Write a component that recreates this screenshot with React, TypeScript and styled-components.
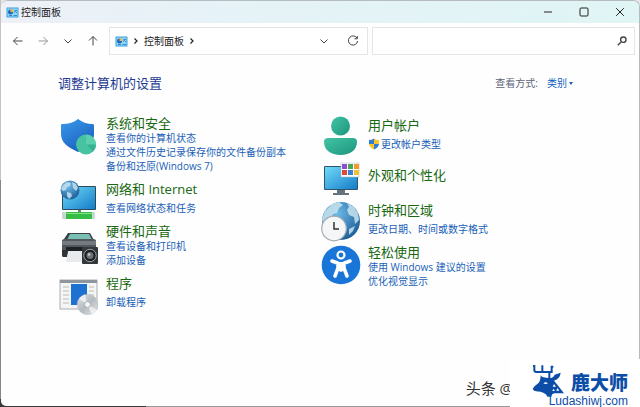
import React from "react";
import styled, { createGlobalStyle } from "styled-components";

const GlobalStyle = createGlobalStyle`
  *, *::before, *::after { box-sizing: border-box; }
  body {
    margin: 0;
    font-family: "Open Sans", "Noto Sans CJK SC", sans-serif;
    font-size: 10px;
    line-height: 14px;
    color: #222;
  }
  button, input, select { font: inherit; color: inherit; }
`;

const Frame = styled.div`
  position: relative;
  display: flex;
  min-height: 100vh;
  padding: 0 0 1px 1px;
  overflow: hidden;
  background:
    linear-gradient(to right, #3a3a3a 146px, #979797 146px) bottom / 100% 8px no-repeat,
    linear-gradient(#c4c4c4 180px, #868686 180px) left / 1px 100% no-repeat,
    #e6e6e6;
`;

const Window = styled.main`
  flex: 1;
  display: flex;
  flex-direction: column;
  min-width: 0;
  background: #fefefe;
  border: 1px solid #b4bcbf;
  border-width: 1px 1px 0 0;
  border-radius: 7px 7px 0 5px;
  overflow: hidden;
`;

const TitleBar = styled.header`
  display: flex;
  align-items: center;
  height: 22px;
  padding-left: 5px;
  gap: 2px;
  background: linear-gradient(to right, #eef0f7, #e6f2f7 30%, #e0f5f5);
`;

const Title = styled.h1`
  flex: 1;
  margin: 0;
  font-size: 10px;
  font-weight: 400;
`;

const CaptionButtons = styled.div`
  display: flex;
  padding-right: 1px;
`;

const CaptionButton = styled.button`
  display: grid;
  place-items: center;
  width: 36px;
  height: 22px;
  padding: 0;
  border: 0;
  background: none;
`;

const NavBar = styled.nav`
  display: flex;
  align-items: center;
  padding: 4px;
  gap: 4px;
`;

const NavButtons = styled.div`
  display: flex;
  flex: none;
  width: 100px;
`;

const IconButton = styled.button<{ $faded?: boolean }>`
  display: grid;
  place-items: center;
  flex: none;
  width: 25px;
  height: 26px;
  padding: 0;
  border: 0;
  background: none;
  color: ${(p) => (p.$faded ? "#979797" : "#444")};
`;

const Field = styled.div<{ $grow: number }>`
  display: flex;
  align-items: center;
  flex: ${(p) => p.$grow} 1 0;
  min-width: 0;
  height: 28px;
  border: 1px solid #e4e5e7;
  background: #fff;
`;

const AddressButtons = styled.div`
  display: flex;
  gap: 4px;
  padding-right: 2px;
`;

const Crumbs = styled.div`
  display: flex;
  align-items: center;
  flex: 1;
  gap: 2px;
  padding-left: 5px;
`;

const Crumb = styled.button`
  padding: 0;
  border: 0;
  background: none;
`;

const SearchInput = styled.input`
  flex: 1;
  min-width: 0;
  padding: 0 8px;
  border: 0;
  outline: 0;
  background: none;
`;

const Content = styled.section`
  padding: 14px 57px 16px;
`;

const Heading = styled.div`
  display: flex;
  align-items: center;
  justify-content: space-between;
  height: 20px;
  padding-right: 9px;
`;

const PageTitle = styled.h2`
  margin: 0;
  font-size: 13px;
  line-height: 20px;
  font-weight: 400;
  color: #1f3a93;
`;

const ViewBy = styled.div`
  display: flex;
  align-items: center;
  color: #5c6478;
`;

const ViewSelect = styled.select`
  appearance: none;
  width: 22px;
  margin-left: 9px;
  padding: 0;
  border: 0;
  background: none;
  color: #0b5fc4;
`;

const Columns = styled.div`
  display: grid;
  grid-template-columns: 1fr 1fr;
  margin-top: 22px;
`;

const Column = styled.ul<{ $lowered?: boolean }>`
  display: flex;
  flex-direction: column;
  gap: 8px;
  margin: 0;
  padding: ${(p) => (p.$lowered ? "2px" : "0")} 0 0;
  list-style: none;
`;

const CategoryRow = styled.li`
  display: flex;
  align-items: flex-start;
  gap: 8px;
`;

const CategoryIcon = styled.svg`
  flex: none;
  width: 40px;
  height: 40px;
  margin-bottom: -8px;
  overflow: visible;
`;

const CategoryText = styled.div<{ $titleOnly: boolean }>`
  min-width: 0;
  white-space: nowrap;
  padding: ${(p) => (p.$titleOnly ? "8px 0 11px" : "0")};
`;

const CategoryTitle = styled.a`
  display: block;
  font-size: 13px;
  line-height: 16px;
  color: #17680f;
  text-decoration: none;
`;

const Links = styled.div<{ $single: boolean }>`
  display: flex;
  flex-direction: column;
  padding-top: ${(p) => (p.$single ? "4px" : "0")};
`;

const TaskLink = styled.a`
  display: flex;
  align-items: center;
  gap: 1px;
  color: #1a5fb8;
  text-decoration: none;
`;

const Watermark = styled.div`
  position: absolute;
  right: 0;
  bottom: 0;
  display: flex;
  align-items: flex-end;
`;

const Handle = styled.span`
  margin-right: -3px;
  padding-bottom: 9px;
  font-size: 15px;
  line-height: 20px;
  color: #333;
`;

const Brand = styled.div`
  position: relative;
  display: flex;
  width: 130px;
  height: 48px;
  padding: 5px 12px 0 22px;
  background: #fff;
  color: #0c4da8;
`;

const BrandText = styled.div`
  display: flex;
  flex: 1;
  flex-direction: column;
  align-items: flex-end;
  gap: 3px;
  margin-left: -33px;
  padding-top: 8px;
`;

const BrandName = styled.strong`
  font-family: "Noto Sans CJK SC", sans-serif;
  font-size: 19px;
  line-height: 20px;
  font-weight: 900;
`;

const BrandSite = styled.span`
  font-family: "Liberation Sans", sans-serif;
  font-size: 12px;
  line-height: 12px;
`;

const PanelIcon = () => (
  <svg width="13" height="11" viewBox="0 0 26 22" aria-hidden="true">
    <rect x="1" y="1" width="24" height="20" rx="1" fill="#3aa0e0" />
    <rect x="3" y="3" width="20" height="16" fill="#8fd6f8" />
    <circle cx="9" cy="10" r="5" fill="#2668bd" />
    <path d="M9 10V4a6 6 0 0 1 6 6z" fill="#f4b63c" />
    <path d="M17 7h5M16 11l3-2 3 3M6 17h6M15 17h7" stroke="#1d78bd" strokeWidth="1.6" fill="none" />
  </svg>
);

const glyphs: Record<string, string> = {
  back: "M10.5 6H1.5M5.5 2L1.5 6l4 4",
  forward: "M1.5 6h9M6.5 2l4 4-4 4",
  down: "M2.5 4.5L6 8l3.5-3.5",
  up: "M6 10.5v-9M2 5.5l4-4 4 4",
  right: "M4.5 3.5L7 6 4.5 8.5",
  refresh: "M10 3.2A4.6 4.6 0 1 0 10.6 6M10.3 1v2.8H7.5",
  minimize: "M2 6h8",
  maximize: "M3 2h6a1 1 0 0 1 1 1v6a1 1 0 0 1-1 1H3a1 1 0 0 1-1-1V3a1 1 0 0 1 1-1z",
  close: "M2.2 2.2l7.6 7.6M9.8 2.2L2.2 9.8",
  search: "M5.3 6.7L1.8 10.2M7.3 2a2.7 2.7 0 1 1 0 5.4 2.7 2.7 0 0 1 0-5.4z",
};

const Glyph = ({ name, weight = 1 }: { name: string; weight?: number }) => (
  <svg width="12" height="12" viewBox="0 0 12 12" fill="none" stroke="currentColor" strokeWidth={weight} aria-hidden="true">
    <path d={glyphs[name]} />
  </svg>
);

const UacShield = () => (
  <svg width="12" height="12" viewBox="0 0 24 24" aria-hidden="true">
    <path d="M12 1Q8 4 2 4v8h10z" fill="#2e7fd4" />
    <path d="M12 1q4 3 10 3v8H12z" fill="#f8c62c" />
    <path d="M2 12q1 7 10 11V12z" fill="#f8c62c" />
    <path d="M22 12q-1 7-10 11V12z" fill="#2e7fd4" />
  </svg>
);

const SecurityArt = () => (
  <>
    <defs>
      <linearGradient id="shield" x1="0" y1="0" x2="0.6" y2="1">
        <stop offset="0" stopColor="#3a9bea" />
        <stop offset="1" stopColor="#1b5fc0" />
      </linearGradient>
    </defs>
    <path d="M20 4c-4 3.5-9 5-15.5 5C3.500 9 3 9.500 3 10.500V19c0 8 6 13 17 18 11-5 16-10 16-18v-8.500c0-1-.5-1.500-1.500-1.500C29 9 24 7 20 4z" fill="url(#shield)" />
    <circle cx="28" cy="29.5" r="10" fill="#48c3a2" />
    <path d="M28 29.5V19.5a10 10 0 0 1 7 17z" fill="#5ad0ae" />
    <path d="M28 29.5h10a10 10 0 0 1-3 7z" fill="#35b391" />
  </>
);

const NetworkArt = () => (
  <>
    <defs>
      <linearGradient id="screen" x1="0" y1="0" x2="1" y2="1">
        <stop offset="0" stopColor="#70daf8" />
        <stop offset="1" stopColor="#157cc8" />
      </linearGradient>
      <radialGradient id="globe" cx="0.4" cy="0.3" r="0.8">
        <stop offset="0" stopColor="#6ebbe8" />
        <stop offset="1" stopColor="#15548f" />
      </radialGradient>
    </defs>
    <rect x="4" y="5" width="34" height="24" rx="1" fill="#2b4a5b" />
    <rect x="5" y="6" width="32" height="22" fill="url(#screen)" />
    <path d="M20 29h3v3h-3z" fill="#6c8e77" />
    <rect x="4" y="31" width="33" height="7" rx="1" fill="#c7d8d2" />
    <rect x="8" y="31" width="26" height="7" fill="#35bd45" />
    <path d="M8 32.5h26" stroke="#83e184" strokeWidth="1" />
    <circle cx="12" cy="9" r="9.5" fill="url(#globe)" />
    <path d="M5 4l4-3 4 1-1 3-3 1-1 3-3 1-2-2zM14 1l4 2 2 4-2 3-3-3zM9 11l4 1 1 3-3 3-2-3z" fill="#c6e1ed" opacity=".85" />
  </>
);

const HardwareArt = () => (
  <>
    <path d="M10 10h22l5 9H4z" fill="#3b4146" />
    <path d="M12 11h19l3 6H9z" fill="#79bfb3" />
    <path d="M4 18q0-2 3-2h28q3 0 3 2v13H4z" fill="#51575c" />
    <path d="M4 18h34v4H4z" fill="#737a80" />
    <path d="M8 24h24v5H8z" fill="#1e2224" />
    <path d="M10 28h20l2 11H8z" fill="#e8eaeb" />
    <path d="M4 27h6l-1 7H5q-1 0-1-2z" fill="#303437" />
    <rect x="24" y="24" width="16" height="17" rx="1" fill="#34383b" />
    <circle cx="32" cy="32.5" r="6.2" fill="#1c1f21" stroke="#a1a5a8" strokeWidth="1" />
    <circle cx="32" cy="32.5" r="3.5" fill="#6d7276" />
    <circle cx="31" cy="31.5" r="1.3" fill="#c5c8ca" />
  </>
);

const ProgramsArt = () => (
  <>
    <defs>
      <linearGradient id="disc" x1="0" y1="0" x2="1" y2="1">
        <stop offset="0" stopColor="#e3e6e8" />
        <stop offset="0.5" stopColor="#b4babf" />
        <stop offset="1" stopColor="#e6e8ea" />
      </linearGradient>
    </defs>
    <rect x="2" y="5" width="37" height="29" fill="#f4f5f6" stroke="#a9aeb3" />
    <path d="M2 5h37v3H2z" fill="#8f969d" />
    <path d="M5 12h6M5 16h6M5 20h6M5 24h6M5 28h6M31 12h5M31 16h5M31 20h5" stroke="#c2b9b4" />
    <rect x="13" y="9" width="16" height="21" fill="#1c71d1" />
    <circle cx="29.5" cy="29.5" r="10.3" fill="url(#disc)" stroke="#b9bec2" strokeWidth="0.5" />
    <path d="M29.5 29.5L21 24a10 10 0 0 1 6-4.500zM29.5 29.5l9 5a10 10 0 0 1-5 4.500z" fill="#fafafa" opacity=".7" />
    <circle cx="29.5" cy="29.5" r="3" fill="#f4f5f6" stroke="#a8aeb2" />
  </>
);

const UsersArt = () => (
  <>
    <defs>
      <linearGradient id="person" x1="0" y1="0" x2="1" y2="1">
        <stop offset="0" stopColor="#43c4a4" />
        <stop offset="1" stopColor="#1b957e" />
      </linearGradient>
    </defs>
    <circle cx="20.5" cy="9" r="9.5" fill="url(#person)" />
    <path d="M8 21h25q4 0 4 4c0 8-7 13-16.500 13S4 33 4 25q0-4 4-4z" fill="url(#person)" />
  </>
);

const AppearanceArt = () => (
  <>
    <rect x="4" y="7" width="34" height="24" rx="1" fill="#2f556c" />
    <rect x="5" y="8" width="32" height="22" fill="url(#screen)" />
    <path d="M17 31h8v3h-8zM13 34h16v2H13z" fill="#65747c" />
    <rect x="21" y="4" width="18" height="14" fill="#f8fafb" stroke="#a9bcc8" strokeWidth="0.5" />
    {["#8e4fcf", "#48a852", "#f19a31", "#dd493b", "#3a7fd6", "#f2bf35"].map((fill, i) => (
      <rect key={fill} x={[22, 28, 34][i % 3]} y={i < 3 ? 5 : 11} width="5" height="5" fill={fill} />
    ))}
  </>
);

const ClockArt = () => (
  <>
    <circle cx="21" cy="19" r="19" fill="url(#globe)" />
    <path d="M5 9l7-7 7-2 4 3-4 3-2 5-4 1-2 5-5 1-3 3-1-4zM27 1l7 4 4 6 1 7-4 4-1-7-5-2-2-5 2-3zM29 27l6-3-2 5-4 4z" fill="#c9e3ef" opacity=".85" />
    <circle cx="14" cy="26.5" r="12.3" fill="#f5f6f7" stroke="#a2abb2" strokeWidth="1.2" />
    <path d="M14 20v7h5" fill="none" stroke="#333" strokeWidth="1.5" />
  </>
);

const AccessArt = () => (
  <>
    <circle cx="21" cy="21" r="19.3" fill="#1976d8" />
    <circle cx="21" cy="11" r="3.5" fill="#1976d8" stroke="#fff" strokeWidth="2.2" />
    <path d="M12 17l6 2.200v5L15 32M30 17l-6 2.200v5L27 32" fill="none" stroke="#fff" strokeWidth="3.6" strokeLinecap="round" strokeLinejoin="round" />
    <path d="M17 18h8v8l-4 2-4-2z" fill="#fff" />
  </>
);

const Deer = () => (
  <svg width="34" height="36" viewBox="0 0 102 108" aria-hidden="true">
    <path d="M3 6h4v12q0 6 6 6h46V8h5M31 4v20M52 24v18" fill="none" stroke="currentColor" strokeWidth="6" />
    <path d="M2 74Q4 68 16 60q10-6 10-26 4 8 26 8 12 0 16-10l18-6q-2 18-20 24 12 14 30 38H72q-12-2-14 10H46q-4-14-34-16-8-1-10-8z" fill="currentColor" />
    <path d="M34 58q7-7 14 0-7 4-14 0z" fill="#fff" />
    <path d="M66 60l6 8h-10zM76 72l6 8h-9zM64 74l5 7h-8z" fill="#fff" />
  </svg>
);

type Category = { title: string; art: () => React.ReactElement; links: string[]; shield?: boolean };

const leftCategories: Category[] = [
  { title: "系统和安全", art: SecurityArt, links: ["查看你的计算机状态", "通过文件历史记录保存你的文件备份副本", "备份和还原(Windows 7)"] },
  { title: "网络和 Internet", art: NetworkArt, links: ["查看网络状态和任务"] },
  { title: "硬件和声音", art: HardwareArt, links: ["查看设备和打印机", "添加设备"] },
  { title: "程序", art: ProgramsArt, links: ["卸载程序"] },
];

const rightCategories: Category[] = [
  { title: "用户帐户", art: UsersArt, links: ["更改帐户类型"], shield: true },
  { title: "外观和个性化", art: AppearanceArt, links: [] },
  { title: "时钟和区域", art: ClockArt, links: ["更改日期、时间或数字格式"] },
  { title: "轻松使用", art: AccessArt, links: ["使用 Windows 建议的设置", "优化视觉显示"] },
];

const CategoryItem = ({ title, art: Art, links, shield }: Category) => (
  <CategoryRow>
    <CategoryIcon viewBox="0 0 40 40" aria-hidden="true">
      <Art />
    </CategoryIcon>
    <CategoryText $titleOnly={links.length === 0}>
      <CategoryTitle href="#">{title}</CategoryTitle>
      {links.length > 0 && (
        <Links $single={links.length === 1}>
          {links.map((text) => (
            <TaskLink href="#" key={text}>
              {shield && <UacShield />}
              {text}
            </TaskLink>
          ))}
        </Links>
      )}
    </CategoryText>
  </CategoryRow>
);

export default function App() {
  return (
    <>
      <GlobalStyle />
      <Frame lang="zh-CN">
        <Window>
          <TitleBar>
            <PanelIcon />
            <Title>控制面板</Title>
            <CaptionButtons>
              <CaptionButton aria-label="最小化"><Glyph name="minimize" /></CaptionButton>
              <CaptionButton aria-label="最大化"><Glyph name="maximize" /></CaptionButton>
              <CaptionButton aria-label="关闭"><Glyph name="close" /></CaptionButton>
            </CaptionButtons>
          </TitleBar>
          <NavBar>
            <NavButtons>
              <IconButton aria-label="后退"><Glyph name="back" /></IconButton>
              <IconButton aria-label="前进" $faded><Glyph name="forward" /></IconButton>
              <IconButton aria-label="最近位置"><Glyph name="down" /></IconButton>
              <IconButton aria-label="向上"><Glyph name="up" /></IconButton>
            </NavButtons>
            <Field $grow={259}>
              <Crumbs>
                <PanelIcon />
                <Glyph name="right" weight={1.2} />
                <Crumb>控制面板</Crumb>
                <Glyph name="right" weight={1.2} />
              </Crumbs>
              <AddressButtons>
                <IconButton aria-label="地址历史"><Glyph name="down" /></IconButton>
                <IconButton aria-label="刷新"><Glyph name="refresh" /></IconButton>
              </AddressButtons>
            </Field>
            <Field $grow={263}>
              <SearchInput aria-label="搜索控制面板" />
              <IconButton aria-label="搜索"><Glyph name="search" weight={1.4} /></IconButton>
            </Field>
          </NavBar>
          <Content>
            <Heading>
              <PageTitle>调整计算机的设置</PageTitle>
              <ViewBy>
                <label htmlFor="view-by">查看方式:</label>
                <ViewSelect id="view-by" defaultValue="category">
                  <option value="category">类别</option>
                </ViewSelect>
                <svg width="4" height="3" viewBox="0 0 4 3" aria-hidden="true">
                  <path d="M0 0h4L2 3z" fill="#1a5fb8" />
                </svg>
              </ViewBy>
            </Heading>
            <Columns>
              <Column>
                {leftCategories.map((c) => <CategoryItem key={c.title} {...c} />)}
              </Column>
              <Column $lowered>
                {rightCategories.map((c) => <CategoryItem key={c.title} {...c} />)}
              </Column>
            </Columns>
          </Content>
        </Window>
        <Watermark>
          <Handle>头条 @</Handle>
          <Brand>
            <Deer />
            <BrandText>
              <BrandName>鹿大师</BrandName>
              <BrandSite>Ludashiwj.com</BrandSite>
            </BrandText>
          </Brand>
        </Watermark>
      </Frame>
    </>
  );
}
